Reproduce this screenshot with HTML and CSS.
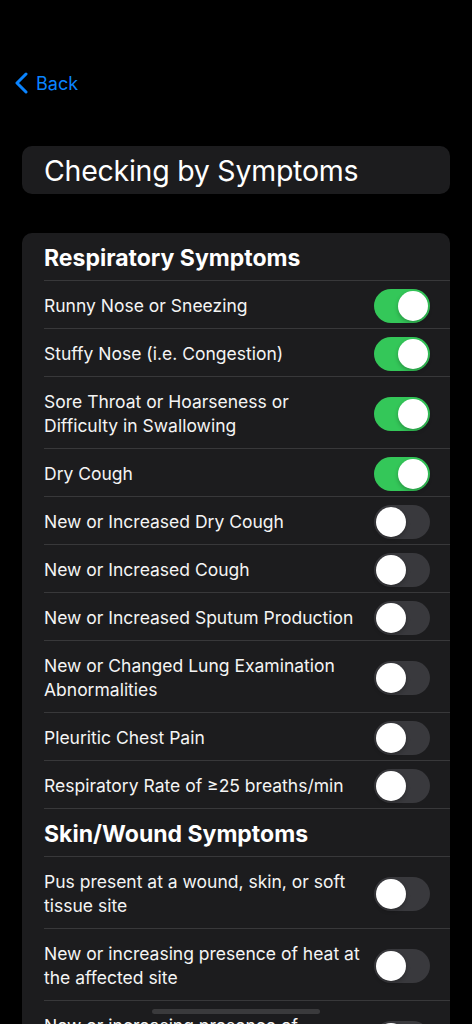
FILE: index.html
```html
<!DOCTYPE html>
<html lang="en">
<head>
    <meta charset="UTF-8">
    <meta name="viewport" content="width=device-width, initial-scale=1.0">
    <title>Checking by Symptoms</title>
    <link rel="stylesheet" href="styles.css">
</head>
<body>
    <div class="screen">
        <nav class="nav-bar">
            <a class="back-link" href="#">
                <svg class="back-chevron" width="15" height="22" viewBox="0 0 15 22">
                    <path d="M12 2 L3 11 L12 20" fill="none" stroke="currentColor" stroke-width="3" stroke-linecap="round" stroke-linejoin="round"/>
                </svg>
                <span>Back</span>
            </a>
        </nav>

        <div class="title-box">
            <h1>Checking by Symptoms</h1>
        </div>

        <div class="card">
            <div class="section-header"><div class="row-inner"><h2>Respiratory Symptoms</h2></div></div>

            <label class="row"><div class="row-inner"><span class="row-text">Runny Nose or Sneezing</span><input type="checkbox" class="switch" checked></div></label>
            <label class="row"><div class="row-inner"><span class="row-text">Stuffy Nose (i.e. Congestion)</span><input type="checkbox" class="switch" checked></div></label>
            <label class="row"><div class="row-inner"><span class="row-text">Sore Throat or Hoarseness or Difficulty in Swallowing</span><input type="checkbox" class="switch" checked></div></label>
            <label class="row"><div class="row-inner"><span class="row-text">Dry Cough</span><input type="checkbox" class="switch" checked></div></label>
            <label class="row"><div class="row-inner"><span class="row-text">New or Increased Dry Cough</span><input type="checkbox" class="switch"></div></label>
            <label class="row"><div class="row-inner"><span class="row-text">New or Increased Cough</span><input type="checkbox" class="switch"></div></label>
            <label class="row"><div class="row-inner"><span class="row-text">New or Increased Sputum Production</span><input type="checkbox" class="switch"></div></label>
            <label class="row"><div class="row-inner"><span class="row-text">New or Changed Lung Examination Abnormalities</span><input type="checkbox" class="switch"></div></label>
            <label class="row"><div class="row-inner"><span class="row-text">Pleuritic Chest Pain</span><input type="checkbox" class="switch"></div></label>
            <label class="row"><div class="row-inner"><span class="row-text">Respiratory Rate of ≥25 breaths/min</span><input type="checkbox" class="switch"></div></label>

            <div class="section-header"><div class="row-inner"><h2>Skin/Wound Symptoms</h2></div></div>

            <label class="row"><div class="row-inner"><span class="row-text">Pus present at a wound, skin, or soft tissue site</span><input type="checkbox" class="switch"></div></label>
            <label class="row"><div class="row-inner"><span class="row-text">New or increasing presence of heat at the affected site</span><input type="checkbox" class="switch"></div></label>
            <label class="row"><div class="row-inner"><span class="row-text">New or increasing presence of swelling at the affected site</span><input type="checkbox" class="switch"></div></label>
        </div>
    </div>

    <div class="home-indicator"></div>
</body>
</html>
```

FILE: styles.css
```css
* {
    box-sizing: border-box;
    font-family: Inter, 'Noto Sans', sans-serif;
}

html, body {
    height: 100%;
}

body {
    margin: 0;
    background: #000;
    color: #fff;
    overflow: hidden;
}

.screen {
    padding: 0 22px;
}

.nav-bar {
    height: 146px;
    padding-top: 72px;
}

.back-link {
    display: inline-flex;
    align-items: center;
    gap: 7px;
    margin-left: -8px;
    color: #0a84ff;
    text-decoration: none;
    font-size: 18px;
}

.title-box {
    background: #1c1c1e;
    border-radius: 10px;
    height: 48px;
    padding: 0 22px;
    display: flex;
    align-items: center;
}

.title-box h1 {
    margin: 0;
    font-size: 28.5px;
    font-weight: 400;
    letter-spacing: -0.25px;
}

.card {
    margin-top: 39px;
    background: #1c1c1e;
    border-radius: 10px;
    overflow: hidden;
}

.section-header,
.row {
    display: block;
    padding-left: 22px;
}

.row-inner {
    display: flex;
    align-items: center;
    justify-content: space-between;
    gap: 10px;
    min-height: 48px;
    padding-top: 2px;
    padding-right: 20px;
    border-bottom: 1px solid #38383a;
}

.section-header h2 {
    margin: 0;
    font-size: 23px;
    font-weight: 700;
    line-height: 24px;
}

.row-text {
    padding: 10.5px 0;
    font-size: 17.5px;
    line-height: 24px;
    color: #f4f4f4;
}

/* iOS style switch */
.switch {
    appearance: none;
    -webkit-appearance: none;
    margin: 0;
    flex-shrink: 0;
    position: relative;
    width: 56px;
    height: 34px;
    border-radius: 17px;
    background: #39393d;
    cursor: pointer;
}

.switch::before {
    content: '';
    position: absolute;
    top: 2px;
    left: 2px;
    width: 30px;
    height: 30px;
    border-radius: 50%;
    background: #fff;
    box-shadow: 0 2px 4px rgba(0, 0, 0, 0.25);
    transition: transform 0.2s ease;
}

.switch:checked {
    background: #34c759;
}

.switch:checked::before {
    transform: translateX(22px);
}

.home-indicator {
    position: fixed;
    left: 152px;
    bottom: 10px;
    width: 168px;
    height: 5px;
    border-radius: 3px;
    background: #3a3a3c;
}
```
